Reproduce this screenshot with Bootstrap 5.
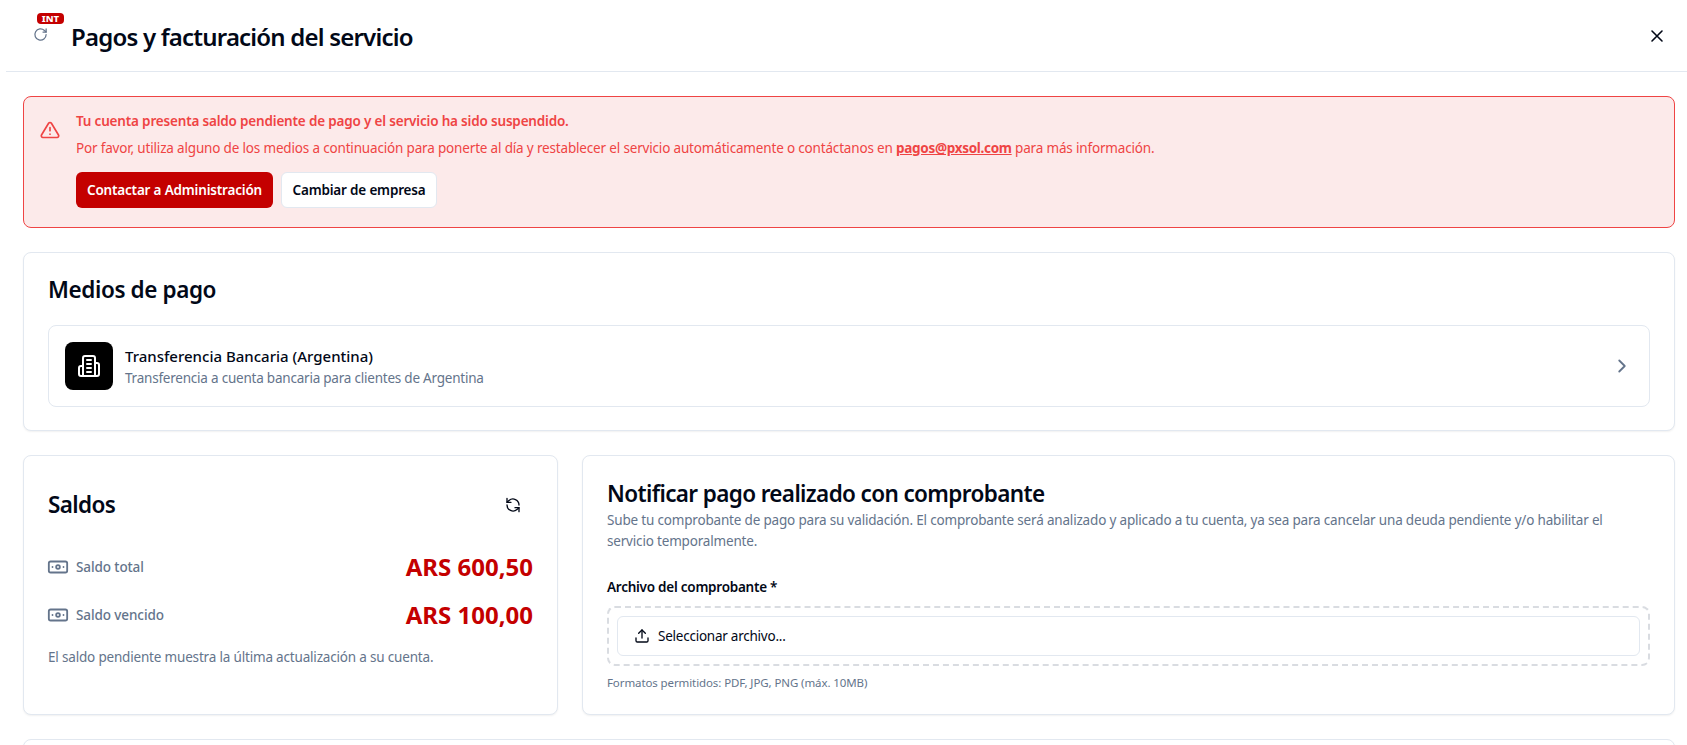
<!DOCTYPE html>
<html lang="es">
<head>
<meta charset="utf-8">
<title>Pagos y facturación del servicio</title>
<link href="https://cdn.jsdelivr.net/npm/bootstrap@5.3.0/dist/css/bootstrap.min.css" rel="stylesheet">
<style>
html,body{height:745px;overflow:hidden;background:#fff}
body{font-family:"Noto Sans","Open Sans",sans-serif;color:#020817;font-size:14px;letter-spacing:-.18px}
.top-bar{margin-left:6px;height:72px;border-bottom:1px solid #e2e8f0;padding:0 22px 0 31px}
.state-box{width:34px;height:40px;position:relative}
.int-tag{position:absolute;left:0;top:-3px;background:#c40000;color:#fff;font-size:9.5px;font-weight:800;letter-spacing:0;line-height:11px;height:11px;width:27px;text-align:center;border-radius:4px}
.state-icon{position:absolute;left:-4px;top:11px}
.page-title{font-size:24px;font-weight:600;margin:2px 0 0;line-height:32px;color:#020817;letter-spacing:-.8px}
.main-area{padding:24px 12px 0 23px;display:flex;flex-direction:column;gap:24px}
.warn-box{background:#fceaea;border:1px solid #ef4444;border-radius:8px;color:#ef4444;padding:14px 16px 0;height:132px;font-size:13.5px}
.warn-icon{margin:9px 16px 0 0}
.warn-box strong{font-weight:600;line-height:20px;display:block}
.warn-box p{margin:7px 0 14px;line-height:20px;letter-spacing:-.17px}
.warn-box a{color:#ef4444;font-weight:700;letter-spacing:-.3px}
.btn-red,.btn-plain{height:36px;font-size:13.5px;font-weight:600;letter-spacing:-.18px;border-radius:6px;padding:0;display:inline-flex;align-items:center;justify-content:center;white-space:nowrap}
.btn-red{background:#c40000;color:#fff;border:0;width:197px}
.btn-plain{background:#fff;color:#020817;border:1px solid #e2e8f0;width:156px}
.panel{background:#fff;border:1px solid #e2e8f0;border-radius:8px;box-shadow:0 1px 2px rgba(0,0,0,.06)}
.panel-pay{height:179px;padding:21px 24px 0}
.panel-heading{font-size:22.5px;font-weight:600;line-height:32px;margin:0;color:#020817;letter-spacing:-.63px}
.heading-wide{letter-spacing:-.4px}
.pay-row{margin-top:19px;height:82px;border:1px solid #e2e8f0;border-radius:8px;padding:0 16px}
.pay-icon{width:48px;height:48px;border-radius:8px;background:#000;color:#fff;margin-right:12px}
.pay-name{font-size:15px;font-weight:500;line-height:22px;letter-spacing:0}
.pay-sub{font-size:13.5px;color:#64748b;line-height:20px;margin-top:1px;letter-spacing:-.22px}
.lower-row{display:grid;grid-template-columns:535px 1fr;gap:24px}
.panel-low{height:260px}
.bal{padding:31px 24px 24px}
.saldos-refresh{margin-right:12px}
.bal-icon{margin-left:-1px}
.bal-label{color:#64748b;font-size:13.5px;font-weight:500;letter-spacing:-.1px;gap:7px}
.bal-value{color:#c40000;font-size:24px;font-weight:700;line-height:32px;letter-spacing:0}
.bal-note{color:#64748b;font-size:13.5px;line-height:20px;margin:16px 0 0}
.notif{padding:22px 24px 0}
.notif-sub{color:#64748b;font-size:13.5px;line-height:21px;margin:0}
.file-label{font-size:13.5px;font-weight:600;line-height:20px;margin-top:25px;margin-bottom:9px;letter-spacing:-.25px}
.drop-zone{border:2px dashed #d9dce1;border-radius:8px;padding:8px;height:60px}
.file-btn{height:40px;border:1px solid #e2e8f0;border-radius:6px;padding:0 16px;font-size:13.5px;background:#fff;letter-spacing:-.24px}
.file-help{color:#64748b;font-size:11.5px;line-height:16px;margin-top:9px;letter-spacing:-.1px}
.clip-panel{height:60px}
</style>
</head>
<body>
<header class="top-bar d-flex align-items-center">
  <div class="state-box">
    <span class="int-tag">INT</span>
    <svg class="state-icon" width="15" height="15" viewBox="0 0 24 24" fill="none" stroke="#64748b" stroke-width="2" stroke-linecap="round" stroke-linejoin="round"><path d="M21 12a9 9 0 1 1-2.64-6.36L21 8"/><path d="M21 3v5h-5"/></svg>
  </div>
  <h1 class="page-title flex-grow-1">Pagos y facturación del servicio</h1>
  <svg width="16" height="16" viewBox="0 0 16 16" fill="none" stroke="#020817" stroke-width="1.6" stroke-linecap="round"><path d="M3 3l10 10M13 3L3 13"/></svg>
</header>
<main class="main-area">
  <section class="warn-box d-flex">
    <svg class="warn-icon flex-shrink-0" width="20" height="20" viewBox="0 0 24 24" fill="none" stroke="#ef4444" stroke-width="2" stroke-linecap="round" stroke-linejoin="round"><path d="M10.3 3.9 1.8 18a2 2 0 0 0 1.7 3h17a2 2 0 0 0 1.7-3L13.7 3.9a2 2 0 0 0-3.4 0z"/><path d="M12 9v4M12 17h.01"/></svg>
    <div>
      <strong>Tu cuenta presenta saldo pendiente de pago y el servicio ha sido suspendido.</strong>
      <p>Por favor, utiliza alguno de los medios a continuación para ponerte al día y restablecer el servicio automáticamente o contáctanos en <a href="#">pagos@pxsol.com</a> para más información.</p>
      <div class="d-flex gap-2"><button class="btn-red">Contactar a Administración</button><button class="btn-plain">Cambiar de empresa</button></div>
    </div>
  </section>
  <section class="panel panel-pay">
    <h2 class="panel-heading heading-wide">Medios de pago</h2>
    <div class="pay-row d-flex align-items-center">
      <div class="pay-icon d-flex align-items-center justify-content-center">
        <svg width="24" height="24" viewBox="0 0 24 24" fill="none" stroke="currentColor" stroke-width="2" stroke-linecap="round" stroke-linejoin="round"><path d="M6 22V4a2 2 0 0 1 2-2h8a2 2 0 0 1 2 2v18Z"/><path d="M6 12H4a2 2 0 0 0-2 2v6a2 2 0 0 0 2 2h2"/><path d="M18 9h2a2 2 0 0 1 2 2v9a2 2 0 0 1-2 2h-2"/><path d="M10 6h4M10 10h4M10 14h4M10 18h4"/></svg>
      </div>
      <div class="flex-grow-1">
        <div class="pay-name">Transferencia Bancaria (Argentina)</div>
        <div class="pay-sub">Transferencia a cuenta bancaria para clientes de Argentina</div>
      </div>
      <svg width="22" height="22" viewBox="0 0 24 24" fill="none" stroke="#64748b" stroke-width="2" stroke-linecap="round" stroke-linejoin="round"><path d="m9 18 6-6-6-6"/></svg>
    </div>
  </section>
  <div class="lower-row">
    <section class="panel panel-low bal">
      <div class="d-flex align-items-center justify-content-between" style="height:36px">
        <h2 class="panel-heading">Saldos</h2>
        <svg class="saldos-refresh" width="16" height="16" viewBox="0 0 24 24" fill="none" stroke="#020817" stroke-width="2" stroke-linecap="round" stroke-linejoin="round"><path d="M3 2v6h6"/><path d="M21 12A9 9 0 0 0 6 5.3L3 8"/><path d="M21 22v-6h-6"/><path d="M3 12a9 9 0 0 0 15 6.7l3-2.7"/></svg>
      </div>
      <div class="d-flex align-items-center justify-content-between" style="margin-top:28px;height:32px">
        <span class="bal-label d-flex align-items-center"><svg class="bal-icon" width="22" height="22" viewBox="0 0 24 24" fill="none" stroke="#64748b" stroke-width="2" stroke-linecap="round" stroke-linejoin="round"><rect x="2" y="6" width="20" height="12" rx="2"/><circle cx="12" cy="12" r="2"/><path d="M6 12h.01M18 12h.01"/></svg>Saldo total</span>
        <span class="bal-value">ARS 600,50</span>
      </div>
      <div class="d-flex align-items-center justify-content-between" style="margin-top:16px;height:32px">
        <span class="bal-label d-flex align-items-center"><svg class="bal-icon" width="22" height="22" viewBox="0 0 24 24" fill="none" stroke="#64748b" stroke-width="2" stroke-linecap="round" stroke-linejoin="round"><rect x="2" y="6" width="20" height="12" rx="2"/><circle cx="12" cy="12" r="2"/><path d="M6 12h.01M18 12h.01"/></svg>Saldo vencido</span>
        <span class="bal-value">ARS 100,00</span>
      </div>
      <p class="bal-note">El saldo pendiente muestra la última actualización a su cuenta.</p>
    </section>
    <section class="panel panel-low notif">
      <h2 class="panel-heading">Notificar pago realizado con comprobante</h2>
      <p class="notif-sub">Sube tu comprobante de pago para su validación. El comprobante será analizado y aplicado a tu cuenta, ya sea para cancelar una deuda pendiente y/o habilitar el servicio temporalmente.</p>
      <div class="file-label">Archivo del comprobante *</div>
      <div class="drop-zone">
        <div class="file-btn d-flex align-items-center gap-2"><svg width="16" height="16" viewBox="0 0 24 24" fill="none" stroke="#020817" stroke-width="2" stroke-linecap="round" stroke-linejoin="round"><path d="M21 15v4a2 2 0 0 1-2 2H5a2 2 0 0 1-2-2v-4"/><path d="m17 8-5-5-5 5"/><path d="M12 3v12"/></svg>Seleccionar archivo...</div>
      </div>
      <div class="file-help">Formatos permitidos: PDF, JPG, PNG (máx. 10MB)</div>
    </section>
  </div>
  <section class="panel clip-panel"></section>
</main>
<script src="https://cdn.jsdelivr.net/npm/bootstrap@5.3.0/dist/js/bootstrap.bundle.min.js"></script>
</body>
</html>
